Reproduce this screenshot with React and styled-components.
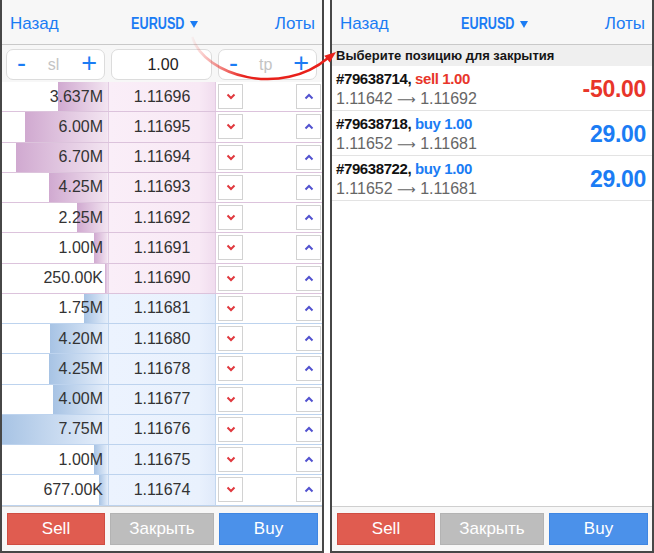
import React from 'react';
import styled, { createGlobalStyle } from 'styled-components';

const Global = createGlobalStyle`
  html, body { margin: 0; padding: 0; background: #fff; }
  body { font-family: "Liberation Sans", Arial, Helvetica, sans-serif; }
  * { box-sizing: border-box; }
`;

const Page = styled.div`
  position: relative;
  width: 654px;
  height: 553px;
  display: flex;
  gap: 6px;
`;

const Panel = styled.div`
  width: 324px;
  height: 553px;
  border: 2px solid #474747;
  border-top: none;
  display: flex;
  flex-direction: column;
  background: #fff;
  overflow: hidden;
`;

const Header = styled.div`
  flex: none;
  height: 45px;
  border-bottom: 1px solid #c9c9c9;
  background: #f7f7f7;
  display: grid;
  grid-template-columns: 1fr auto 1fr;
  align-items: center;
  padding: 4px 7px 0 8px;
`;

const NavLink = styled.span`
  color: #1b7cf4;
  font-size: 17px;
  justify-self: ${p => (p.$right ? 'end' : 'start')};
`;

const Title = styled.span`
  color: #1b7cf4;
  display: flex;
  align-items: center;
  gap: 5px;
  padding-left: 4px;
`;

const TitleText = styled.span`
  display: inline-block;
  font-weight: bold;
  font-size: 16px;
  transform: scaleX(0.79);
  margin: 0 -7px;
`;

const Inputs = styled.div`
  flex: none;
  height: 37px;
  background: #f7f7f7;
  display: grid;
  grid-template-columns: 99px 101px 99px;
  gap: 6px;
  padding: 4px 4px 2px;
`;

const InputBox = styled.div`
  background: #fff;
  border: 1px solid #dcdcdc;
  border-radius: 7px;
  display: flex;
  align-items: center;
  justify-content: ${p => (p.$center ? 'center' : 'space-between')};
  padding: 0 7px 0 10px;
  font-size: 16px;
  color: #222;
`;

const Step = styled.span`
  color: #1b7cf4;
  font-size: 27px;
  line-height: 1;
  margin-top: -3px;
`;

const Placeholder = styled.span`
  color: #c4c4c4;
  font-size: 16px;
`;

const Book = styled.div`
  flex: none;
  display: flex;
  flex-direction: column;
`;

const Row = styled.div`
  height: 30.25px;
  display: grid;
  grid-template-columns: 107px 107px 1fr;
  border-bottom: 1px solid ${p => (p.$buy ? '#bdd3ee' : '#dcc3dc')};
  font-size: 16px;
  color: #333;
`;

const VolCell = styled.div`
  display: flex;
  align-items: center;
  justify-content: flex-end;
  padding-right: 5px;
  border-right: 1px solid ${p => (p.$buy ? '#c3d7ef' : '#e2cbe2')};
  background-image: ${p =>
    p.$buy
      ? 'linear-gradient(to right, #a7c3e4, #e6effb)'
      : 'linear-gradient(to right, #d0a9d0, #f3e5f1)'};
  background-repeat: no-repeat;
  background-position: right top;
`;

const PriceCell = styled.div`
  display: flex;
  align-items: center;
  justify-content: center;
  border-right: 1px solid ${p => (p.$buy ? '#c3d7ef' : '#e2cbe2')};
  background: ${p =>
    p.$buy
      ? 'linear-gradient(to right, #ecf3fe 0%, #e9f1fd 85%, #e0eafa 100%)'
      : 'linear-gradient(to right, #faeef8 0%, #f8e9f5 85%, #f0dcee 100%)'};
`;

const Actions = styled.div`
  display: flex;
  align-items: center;
  justify-content: space-between;
  padding: 0 1px 0 2px;
`;

const SmallBtn = styled.div`
  width: 25px;
  height: 25px;
  border: 1px solid #d2d2d2;
  background: #fff;
  display: flex;
  align-items: center;
  justify-content: center;
`;

const Toolbar = styled.div`
  flex: none;
  height: 45.5px;
  background: #f7f7f7;
  border-top: 1px solid #cfcfcf;
  display: grid;
  grid-template-columns: 98px 104px 99px;
  column-gap: 5px;
  align-items: center;
  padding: 1px 5px 0;
`;

const BigBtn = styled.div`
  height: 32px;
  display: flex;
  align-items: center;
  justify-content: center;
  color: #fff;
  font-size: 17px;
  background: ${p => p.$bg};
  border: 1px solid ${p => p.$border};
`;

const Section = styled.div`
  flex: none;
  height: 21px;
  background: #efefef;
  font-weight: bold;
  font-size: 13px;
  color: #151515;
  display: flex;
  align-items: center;
  padding-left: 4px;
`;

const PosRow = styled.div`
  flex: none;
  height: 45px;
  border-bottom: 1px solid #e3e3e3;
  display: flex;
  align-items: center;
  justify-content: space-between;
  padding: 2px 6px 0 4px;
`;

const PosInfo = styled.div`
  display: flex;
  flex-direction: column;
  gap: 3px;
`;

const PosTitle = styled.div`
  font-weight: bold;
  font-size: 15px;
  color: #111;
  letter-spacing: -0.4px;
`;

const Side = styled.span`
  color: ${p => (p.$sell ? '#e8352a' : '#1b7cf4')};
`;

const PosPrices = styled.div`
  font-size: 16px;
  color: #666;
`;

const ArrowGlyph = styled.span`
  font-family: "DejaVu Sans", sans-serif;
  font-size: 13px;
`;

const Amount = styled.div`
  font-weight: bold;
  font-size: 23px;
  color: ${p => (p.$neg ? '#e8352a' : '#1b7cf4')};
  letter-spacing: -0.3px;
`;

const Spacer = styled.div`
  flex: 1;
  background: #fff;
`;

const ArrowLayer = styled.svg`
  position: absolute;
  left: 0;
  top: 0;
  pointer-events: none;
`;

const Caret = () => (
  <svg width="8" height="8" viewBox="0 0 8 8">
    <polygon points="0,1 8,1 4,8" fill="#1b7cf4" />
  </svg>
);

const ChevronDown = () => (
  <svg width="10" height="7" viewBox="0 0 10 7">
    <polyline points="1.5,1.5 5,5 8.5,1.5" fill="none" stroke="#e0393e" strokeWidth="2" />
  </svg>
);

const ChevronUp = () => (
  <svg width="10" height="7" viewBox="0 0 10 7">
    <polyline points="1.5,5.5 5,2 8.5,5.5" fill="none" stroke="#5252cf" strokeWidth="2" />
  </svg>
);

const MAXV = 7.75;
const BAR = 107;

const rows = [
  { v: '3.637M', n: 3.637, p: '1.11696' },
  { v: '6.00M', n: 6.0, p: '1.11695' },
  { v: '6.70M', n: 6.7, p: '1.11694' },
  { v: '4.25M', n: 4.25, p: '1.11693' },
  { v: '2.25M', n: 2.25, p: '1.11692' },
  { v: '1.00M', n: 1.0, p: '1.11691' },
  { v: '250.00K', n: 0.25, p: '1.11690' },
  { v: '1.75M', n: 1.75, p: '1.11681', buy: true },
  { v: '4.20M', n: 4.2, p: '1.11680', buy: true },
  { v: '4.25M', n: 4.25, p: '1.11678', buy: true },
  { v: '4.00M', n: 4.0, p: '1.11677', buy: true },
  { v: '7.75M', n: 7.75, p: '1.11676', buy: true },
  { v: '1.00M', n: 1.0, p: '1.11675', buy: true },
  { v: '677.00K', n: 0.677, p: '1.11674', buy: true },
];

const positions = [
  { id: '#79638714', side: 'sell', lot: '1.00', from: '1.11642', to: '1.11692', pl: '-50.00', neg: true },
  { id: '#79638718', side: 'buy', lot: '1.00', from: '1.11652', to: '1.11681', pl: '29.00' },
  { id: '#79638722', side: 'buy', lot: '1.00', from: '1.11652', to: '1.11681', pl: '29.00' },
];

const TopBar = () => (
  <Header>
    <NavLink>Назад</NavLink>
    <Title>
      <TitleText>EURUSD</TitleText>
      <Caret />
    </Title>
    <NavLink $right>Лоты</NavLink>
  </Header>
);

const BottomBar = () => (
  <Toolbar>
    <BigBtn $bg="#e05c50" $border="#cf4d42">Sell</BigBtn>
    <BigBtn $bg="#bdbdbd" $border="#b3b3b3">Закрыть</BigBtn>
    <BigBtn $bg="#4b91ea" $border="#3f86e2">Buy</BigBtn>
  </Toolbar>
);

export default function App() {
  return (
    <>
      <Global />
      <Page>
        <Panel>
          <TopBar />
          <Inputs>
            <InputBox>
              <Step>-</Step>
              <Placeholder>sl</Placeholder>
              <Step>+</Step>
            </InputBox>
            <InputBox $center>1.00</InputBox>
            <InputBox>
              <Step>-</Step>
              <Placeholder>tp</Placeholder>
              <Step>+</Step>
            </InputBox>
          </Inputs>
          <Book>
            {rows.map((r, i) => (
              <Row key={i} $buy={r.buy}>
                <VolCell
                  $buy={r.buy}
                  style={{ backgroundSize: `${(r.n / MAXV) * BAR}px 100%` }}
                >
                  {r.v}
                </VolCell>
                <PriceCell $buy={r.buy}>{r.p}</PriceCell>
                <Actions>
                  <SmallBtn>
                    <ChevronDown />
                  </SmallBtn>
                  <SmallBtn>
                    <ChevronUp />
                  </SmallBtn>
                </Actions>
              </Row>
            ))}
          </Book>
          <Spacer />
          <BottomBar />
        </Panel>
        <Panel>
          <TopBar />
          <Section>Выберите позицию для закрытия</Section>
          {positions.map((p, i) => (
            <PosRow key={i}>
              <PosInfo>
                <PosTitle>
                  {p.id}, <Side $sell={p.side === 'sell'}>{p.side} {p.lot}</Side>
                </PosTitle>
                <PosPrices>
                  {p.from} <ArrowGlyph>⟶</ArrowGlyph> {p.to}
                </PosPrices>
              </PosInfo>
              <Amount $neg={p.neg}>{p.pl}</Amount>
            </PosRow>
          ))}
          <Spacer />
          <BottomBar />
        </Panel>
        <ArrowLayer width="654" height="100" viewBox="0 0 654 100">
          <defs>
            <linearGradient id="arrowFade" gradientUnits="userSpaceOnUse" x1="190" y1="0" x2="245" y2="0">
              <stop offset="0" stopColor="#e8201a" stopOpacity="0" />
              <stop offset="1" stopColor="#e8201a" stopOpacity="1" />
            </linearGradient>
          </defs>
          <path
            d="M192 37 C 205 77, 282 97, 328 58"
            fill="none"
            stroke="url(#arrowFade)"
            strokeWidth="2.5"
          />
          <polygon points="336,52 329.8,62.6 324.2,55.8" fill="#e8201a" />
        </ArrowLayer>
      </Page>
    </>
  );
}
